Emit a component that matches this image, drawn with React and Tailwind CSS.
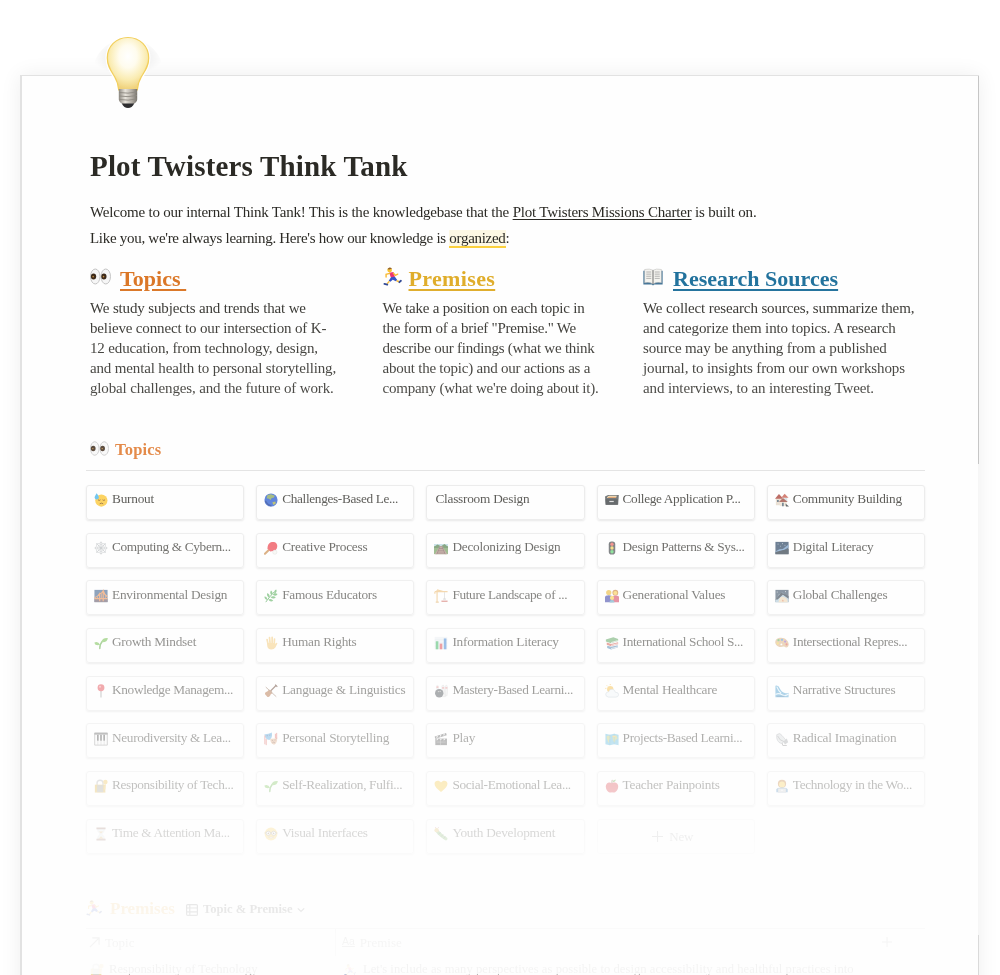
import React from "react";

const shapes = {
  eyes: (
    <>
      <ellipse cx="4" cy="8" rx="3.6" ry="5.7" fill="#f6f6f6" stroke="#bdbdbd" strokeWidth=".7" />
      <ellipse cx="12" cy="8" rx="3.6" ry="5.7" fill="#f6f6f6" stroke="#bdbdbd" strokeWidth=".7" />
      <ellipse cx="2.700" cy="8" rx="2" ry="2.300" fill="#33200f" />
      <ellipse cx="10.600" cy="8" rx="2" ry="2.300" fill="#33200f" />
      <circle cx="2.400" cy="8.100" r=".6" fill="#c58a3a" />
      <circle cx="10.300" cy="8.100" r=".6" fill="#c58a3a" />
    </>
  ),
  runner: (
    <>
      <circle cx="5.600" cy="2.600" r="2" fill="#f7c12c" />
      <path d="M3.800 1.800Q5.200-.6 7.600 1.200L5.400 2.100Z" fill="#8a5a2a" />
      <path d="M5.200 4.800 8.800 4.200 10 8.400 6.800 9.200Z" fill="#ea2a6a" />
      <path d="M5.600 5.400 2.600 6.200 2.600 8.400M8.800 5.200l1.600 1.800 2-1" fill="none" stroke="#f7b72c" strokeWidth="1.200" strokeLinecap="round" />
      <path d="M6.800 8.600 10 8.200 12 11 10.900 12 8.200 10.800 6.200 12.400 4.800 11.600Z" fill="#2a4cc4" />
      <path d="m5.400 12-2 2.200M11.400 11.600l2.400.8" stroke="#f7b72c" strokeWidth="1.200" />
      <path d="m1.200 14.200 2.400.7M13.800 12.800l1.300-1.200" stroke="#27408f" strokeWidth="1.500" strokeLinecap="round" />
    </>
  ),
  book: (
    <>
      <path d="M.3 3h15.400v11H9l-1 .8-1-.8H.3Z" fill="#3d6f92" />
      <path d="M1.300 2Q5.500 1 8 2.600 10.500 1 14.700 2v10.500Q10.500 11.700 8 13.500 5.500 11.700 1.300 12.500Z" fill="#f4f3ee" stroke="#b5b5b5" strokeWidth=".4" />
      <path d="M8 2.600v10.900" stroke="#666" strokeWidth=".8" />
      <path d="M2.600 4h4M2.600 5.700h4M2.600 7.400h4M2.600 9.100h4M9.400 4h4M9.400 5.700h4M9.400 7.400h4M9.400 9.100h4" stroke="#999" strokeWidth=".6" />
    </>
  ),
  sweat: (
    <>
      <circle cx="8.400" cy="8.600" r="7" fill="#fbc531" />
      <path d="M4.600 7.800q1.400 1.400 2.800 0M9.800 7.800q1.400 1.400 2.800 0M6.500 12.400q2-1.600 4 0" fill="none" stroke="#7a4a12" strokeWidth="1" />
      <path d="M3 .4C5 3.200 5.600 4.200 5.600 5.400A2.500 2.500 0 0 1 .7 5.400C.7 4.200 1.500 3 3 .4Z" fill="#45b4ec" />
    </>
  ),
  globe: (
    <>
      <circle cx="8" cy="8" r="7.500" fill="#2f5fd0" />
      <path d="M4 2.200 8 1.400 12.500 3 11 5.500 8.800 5.600 7.500 8 5.600 6.500 3 6Z" fill="#8aa860" />
      <path d="M9.500 10.500 13 9.800 13.400 12 10.800 13.600Z" fill="#a9b04a" />
      <path d="M1.500 9q2.500 5 7 5.500" fill="none" stroke="#1c3f9c" strokeWidth="1.600" />
    </>
  ),
  cardbox: (
    <>
      <path d="M0 4 3.500 2.300h12.300L15 13.500H.8Z" fill="#4b4f52" />
      <path d="M2.500 4.500 4.500 3h9l-1 2.600H2.500Z" fill="#eadfb6" />
      <path d="M2.500 5.600h10l.4-1.200H4.500Z" fill="#d98b4a" />
      <path d="M.5 7h14v6.500H.8Z" fill="#363b3e" />
      <path d="M5 9h5v1.400H5Z" fill="#d8d8d8" />
    </>
  ),
  houses: (
    <>
      <path d="M1 6h8v8H1Z" fill="#e3d6c6" />
      <path d="M0 6.500 4.500 1 9.600 6.500Z" fill="#a94136" />
      <path d="M8 5h6v5H8Z" fill="#cfdbe0" />
      <path d="M7.200 5.500 11 .8l4.500 4.700Z" fill="#c75b4c" />
      <path d="M5.500 9.500h8V15h-8Z" fill="#ece0d0" />
      <path d="M4.500 10.300 9 5.800l5.600 4.500Z" fill="#9b4a3e" />
      <path d="M8 11h2v4H8ZM2.300 8h2v2.200h-2Z" fill="#4e6474" />
      <path d="m12 12 4 3.500h-3.500Z" fill="#30383b" />
    </>
  ),
  web: (
    <g fill="none" stroke="#a5aaae" strokeWidth=".6">
      <path d="M8 .5v15M.5 8h15M2.600 2.600l10.800 10.800M13.400 2.600 2.600 13.400" />
      <path d="m8 1.600 2.200 1.500 2.600.2.300 2.600L14.500 8l-1.400 2.200-.3 2.600-2.600.3L8 14.500l-2.200-1.400-2.600-.3-.3-2.600L1.500 8l1.400-2.200.3-2.600 2.600-.2ZM8 4l2.800 1.200L12 8l-1.200 2.800L8 12l-2.800-1.200L4 8l1.200-2.800ZM8 6.200 9.800 8 8 9.800 6.200 8Z" />
    </g>
  ),
  pingpong: (
    <>
      <path d="m6.300 9.500-5.200 5" stroke="#c98a48" strokeWidth="2.400" strokeLinecap="round" />
      <path d="M4 8.200C4 2.500 8 .6 11.500 1.200 15.600 2 16.500 7.200 13 10.500L10.500 11.500 7 12Z" fill="#ec3b45" />
      <circle cx="12.400" cy="12.800" r="2.400" fill="#f5f5f0" stroke="#ccc" strokeWidth=".5" />
    </>
  ),
  railway: (
    <>
      <path d="M0 3.500h16V15H0Z" fill="#6f9b5a" />
      <path d="M0 3.500h16V6H0Z" fill="#b7d9e6" />
      <path d="M0 6.500 4 4l4 2 4-2.500 4 3V8H0Z" fill="#4f7d48" />
      <path d="M6.400 6h3.200L15 15H1Z" fill="#b08a80" />
      <path d="M7 6 3.200 15M9 6l3.800 9M5.500 8.600h5M4.500 11.200h7M3.400 13.800h9.200" stroke="#6f5650" strokeWidth=".8" />
    </>
  ),
  traffic: (
    <>
      <rect x="4.300" y=".5" width="7.400" height="15" rx="3.200" fill="#43484b" />
      <circle cx="8" cy="3.700" r="1.900" fill="#f0625a" />
      <circle cx="8" cy="8" r="1.900" fill="#f3cf52" />
      <circle cx="8" cy="12.300" r="1.900" fill="#57d56a" />
    </>
  ),
  night: (
    <>
      <path d="M.5 1h15v14H.5Z" fill="#27415f" />
      <path d="M.5 12 5 9.500 9 9l6.500-5V7L11 10l-4 1.500L.5 14Z" fill="#6d97c4" />
      <path d="M.5 12.500 6 11l9.500-2v6H.5Z" fill="#263441" />
      <path d="M3 3.500h1M8 3h1M11 5h.8M6 6h.7" stroke="#dbe8f5" strokeWidth=".8" />
    </>
  ),
  bridge: (
    <>
      <path d="M.5 1h15v14H.5Z" fill="#3c5f8a" />
      <path d="M.5 11.500h15V15H.5Z" fill="#5f5060" />
      <path d="M.5 11h15M6.500 5V14M10.500 2V14M.5 10Q5 8.500 6.500 5q2 1 4-3Q12 7 15.500 8.800" fill="none" stroke="#e88a4b" strokeWidth="1.400" />
      <path d="M8.500 5v6M4 8.500v2.500M13 7.500v3.500" stroke="#e88a4b" strokeWidth=".9" />
    </>
  ),
  herb: (
    <>
      <path d="M2 15Q6 9 12 3" fill="none" stroke="#3f9c46" strokeWidth="1.100" />
      <path d="M12 5Q11 1.500 14 .5 15.500 3.500 12 5ZM8.500 7Q6 4.500 8 1.800 11 4 8.500 7ZM10 6.600q2-2.600 5.500-1Q14 9 10 6.600ZM6 10Q2.500 8 3.800 4.600 7.500 6.500 6 10ZM7.500 9.300Q10.500 7 13.500 9.400 11 12.500 7.500 9.300ZM3.800 12.600Q.4 12 .5 8.700q3.500.4 3.300 3.900ZM5 12q3.500-1.500 5.600 1.500Q7 15.600 5 12Z" fill="#55ad58" />
    </>
  ),
  crane: (
    <>
      <path d="M1 3h14.500M3.500 1v14M3.500 1l7 2M1 3v2.500" stroke="#ecbc74" strokeWidth="1.300" fill="none" />
      <path d="M2 15h3.500" stroke="#e2b46e" strokeWidth="1.300" />
      <path d="M12 3.500v8" stroke="#bbb" strokeWidth=".7" />
      <path d="M8.500 14h7" stroke="#cf6a62" strokeWidth="1.500" />
      <path d="M10.500 11.500h3" stroke="#bbb" strokeWidth="1.300" />
    </>
  ),
  family: (
    <>
      <circle cx="4.300" cy="4" r="3" fill="#e9b62f" />
      <circle cx="11.800" cy="4.200" r="3.300" fill="#c87a2b" />
      <circle cx="11.800" cy="4.600" r="2.300" fill="#f8cb45" />
      <path d="M0 15V9.500Q0 7 4.300 7T8 9.500V15Z" fill="#3b40a6" />
      <path d="M8 15V9.500Q8 7.500 12 7.500T16 9.500V15Z" fill="#d5405c" />
      <circle cx="8" cy="10.200" r="2.400" fill="#f8cb45" />
      <path d="M5.200 15.500Q5.200 12.600 8 12.600t2.800 2.900Z" fill="#5ba4bf" />
    </>
  ),
  galaxy: (
    <>
      <path d="M.5 1h15v14H.5Z" fill="#34495f" />
      <path d="M.5 13 5 6 8 4l7.500 6v5H.5Z" fill="#a7c5d4" />
      <path d="m7 4 8.500 4v3L9 6.500 3 12 .5 12Z" fill="#1f2c3b" />
      <path d="M4 15Q5 8.500 9.500 9t5 6Z" fill="#e9d2b0" />
      <path d="m9 12 1 2H8Z" fill="#db6a3d" />
      <path d="M2 3.500h1M11.500 3h1" stroke="#fff" strokeWidth=".8" />
    </>
  ),
  seedling: (
    <>
      <path d="M6.600 15Q6.200 10 9.500 6" fill="none" stroke="#5aa83e" strokeWidth="1.500" />
      <path d="M8.500 7Q9 1.800 15.800 2.200 15.500 7.500 8.500 7ZM7 10Q4.500 5.500.3 7.600 1.500 11.600 7 10Z" fill="#6cbb45" />
    </>
  ),
  hand: (
    <>
      <path d="M4.600 9 3.500 4M6.900 8 6.300 1.800M9.300 8V1.500M11.700 8.500l.3-5" stroke="#f3c978" strokeWidth="1.900" strokeLinecap="round" />
      <path d="M3.600 8h9l.5 1Q14 7.200 15.400 8.200L13 13.200Q11.400 15.500 8.500 15.500 4 15.500 3.600 10.500Z" fill="#f3c978" />
    </>
  ),
  chart: (
    <>
      <path d="M.8 1h14.400v14.200H.8Z" fill="#e9eef2" />
      <path d="M.8 4.500h14.400M.8 8h14.400M.8 11.500h14.400" stroke="#c9d3db" strokeWidth=".5" />
      <path d="M2 6h3v9.200H2Z" fill="#38b35c" />
      <path d="M6.500 8.700h3v6.500h-3Z" fill="#dc4148" />
      <path d="M11.200 2.800h3v12.400h-3Z" fill="#3a7fd0" />
    </>
  ),
  books: (
    <>
      <path d="M1 4 9.500 1.500l5.500 2v2.300L7 8.200 1 6.200Z" fill="#5da35f" />
      <path d="m2 7.500 5 1.600 8-2v2.400l-8 2.200-5-1.700Z" fill="#d35548" />
      <path d="m2.500 11 4.500 1.400 7.500-1.900v2.600L7 15.300l-4.500-1.500Z" fill="#4f84b2" />
      <path d="m7 7.500 7.500-2.200M7 10.800l7.500-2M7 14.400l7-1.800" stroke="#eee" strokeWidth=".9" />
    </>
  ),
  palette: (
    <>
      <path d="M5.500 2C11 1 16 5.500 15.700 9.800c-.2 3.200-3 4-4.700 2.600-1.500-1.100-2.900.2-4.300.3C2.500 12.700 0 9.500.3 6.700.5 3.800 2.800 2.300 5.500 2Z" fill="#d9ae7c" />
      <circle cx="4" cy="4.800" r="1.300" fill="#4caf50" />
      <circle cx="8" cy="4.300" r="1.300" fill="#3d8bd4" />
      <circle cx="11.600" cy="6.400" r="1.300" fill="#8c54bd" />
      <circle cx="13.200" cy="9.600" r="1.200" fill="#e1493e" />
      <circle cx="3.200" cy="8.400" r="1.300" fill="#f2ce3b" />
      <circle cx="7.300" cy="9.600" r="1.100" fill="#fff" />
    </>
  ),
  pin: (
    <>
      <path d="M8 7v8.500" stroke="#9c9c9c" strokeWidth="1.400" />
      <circle cx="8" cy="4.300" r="3.900" fill="#e3424a" />
      <circle cx="6.900" cy="3.200" r="1.200" fill="#f69aa0" />
    </>
  ),
  violin: (
    <>
      <path d="m6.500 9 7.500-7.500" stroke="#5a3524" strokeWidth="1.500" />
      <path d="M1.200 11.800C.4 9.800 2.800 8.700 4.200 8.200 5 6.500 6.500 5.700 8.400 7.600s1 3.500-.7 4.200C7.200 13.200 6 15.600 4 14.800Z" fill="#b0683a" />
      <path d="m2 3.500 12 11" stroke="#8c6a52" strokeWidth="1" />
      <path d="m12.800.8 2.400 2.400" stroke="#5a3524" strokeWidth="1.300" />
    </>
  ),
  piano: (
    <>
      <path d="M.8 1h14.400v14H.8Z" fill="#fafafa" stroke="#777" strokeWidth=".9" />
      <path d="M.5 1h15v2H.5Z" fill="#555" />
      <path d="M4.400 3v7M8 3v7M11.600 3v7" stroke="#333" strokeWidth="1.900" />
      <path d="M4.400 10v5M8 10v5M11.600 10v5" stroke="#999" strokeWidth=".6" />
    </>
  ),
  masks: (
    <>
      <path d="M.5 2.500Q4 3 9 .5q1 7-3 8.500Q1.500 9 .5 2.500Z" fill="#4a9fda" />
      <path d="M7 7.500q4 1 8-1.500.5 7-3.500 8.500Q7.500 14 7 7.500Z" fill="#dba780" />
      <path d="M3 4.300h1.400M6 3.700l1.300-.3" stroke="#173e78" strokeWidth="1" />
      <path d="M1 4v10M2.500 8v7M14.500 1v7M13 2v5" stroke="#d9544e" strokeWidth="1.100" />
      <path d="M9 9.600h1.300M12 9.200l1.200-.2M9.500 12.400q1.500-1.500 3 0" fill="none" stroke="#6b3b2b" strokeWidth=".8" />
    </>
  ),
  bowling: (
    <>
      <path d="M9 2q2-2 2.500.5L12 8l1 6.500H9ZM13 2q2-1.500 2.300.5l.3 5-.6 6h-2Z" fill="#ececec" stroke="#bbb" strokeWidth=".4" />
      <path d="M9.300 4.500h2.300M13 4.500h2.300" stroke="#e04747" strokeWidth="1" />
      <path d="M2.800 1.500Q4 .4 5.100 1.500L6 8H2Z" fill="#e7e7e7" />
      <path d="M2.800 3.500h2.300" stroke="#e04747" />
      <circle cx="6" cy="10.600" r="4.800" fill="#454a50" />
      <circle cx="5" cy="8.700" r=".7" fill="#bbb" />
      <circle cx="7" cy="8.500" r=".7" fill="#bbb" />
    </>
  ),
  cloud: (
    <>
      <circle cx="6" cy="6" r="3.600" fill="#f6bb3e" />
      <path d="M6 0v1.300M.3 5h1.300M2 1.600l1 1" stroke="#f6bb3e" strokeWidth="1" />
      <path d="M4 15Q.6 14.500.8 11.600 1.200 9 4 9 5 5.500 8.500 6q2.800.4 3.300 3.400 3.800-.1 3.800 2.900Q15.300 15 12.300 15Z" fill="#f1f5f8" stroke="#b6c4cc" strokeWidth=".7" />
    </>
  ),
  clapper: (
    <>
      <path d="M1.500 7.500h13.300V15H1.500Z" fill="#4b4b4b" />
      <path d="m.8 5.200 13-4 .7 2.500-13 4Z" fill="#4b4b4b" />
      <path d="m3 6.500 1-2.300M7 5.300 8 3M11 4l1-2.300M3 9.400l1.500-1.700M7 9.400l1.500-1.700M11 9.400l1.500-1.700" stroke="#eee" strokeWidth="1.200" />
      <path d="M2.800 11.500h10.500M7.500 9.800V15" stroke="#aaa" strokeWidth=".6" />
    </>
  ),
  map: (
    <>
      <path d="m.5 2 5 1 5-1 5 1v12l-5-1-5 1-5-1Z" fill="#56b5dc" />
      <path d="M2 4.500 5.500 4 6.500 7 4.500 9.500 5 13 3.500 11 2 7ZM8.500 4.500 13 4l1.500 3-2.500 2-1 3.500L9 9.500Z" fill="#b9c66e" />
      <path d="M5.500 3v12M10.500 2v12" stroke="#3a93bd" strokeWidth=".5" />
      <path d="M8.800 5h3" stroke="#ebbe4a" strokeWidth="1.600" />
    </>
  ),
  wave: (
    <>
      <path d="M.5 2Q4 1 5.500 5T12 10.500q2 .4 3.500-.5v5H.5Z" fill="#4a9ed0" />
      <path d="M2 3q2 5 5 7.500M.5 12q4-2 7.500.3t7.500-.8" fill="none" stroke="#dff2fb" strokeWidth="1.300" />
      <path d="M2 14h9" stroke="#2d6f9f" strokeWidth="1" />
    </>
  ),
  telescope: (
    <>
      <path d="M2 3Q6 .2 8 4l4.500 5.300-5.300 3.900Q1 11 2 3Z" fill="#d7dadc" stroke="#9a9fa3" strokeWidth=".8" />
      <path d="M3 4.500Q5 10 11 11.300" fill="none" stroke="#85898c" />
      <path d="m9.500 11 4-3.500 1.500 4.200-3.600 2.500Z" fill="#9da1a3" />
      <path d="M8 12.500 9 15.500h4.500" fill="none" stroke="#777" />
    </>
  ),
  lockkey: (
    <>
      <path d="M3.500 7V4.600q0-3.200 3.400-3.200t3.400 3.200V7" fill="none" stroke="#aaa" strokeWidth="1.600" />
      <path d="M1 6.500h12v9H1Z" fill="#d9a92f" />
      <path d="M3.500 7h7v8h-7Z" fill="#9b9a8c" />
      <circle cx="13" cy="3.500" r="2.600" fill="#edba3c" />
      <path d="m12.800 6-.6 6" stroke="#edba3c" strokeWidth="1.500" />
    </>
  ),
  heart: <path d="M8 14.800C3.500 11.500.6 8.700.6 5.500.6 1.800 5.500.3 8 4 10.500.3 15.400 1.800 15.400 5.500c0 3.200-2.900 6-7.400 9.300Z" fill="#f5c22f" />,
  apple: (
    <>
      <path d="M8 4.800Q4.500 3 2.200 5C-.6 8 1.500 13.500 4.500 15.200q2 .6 3.500-.2 1.500.8 3.500.2C14.500 13.500 16.600 8 13.800 5 11.500 3 8 4.800 8 4.800Z" fill="#d93840" />
      <path d="M8 5Q7.600 3 8.300 1" fill="none" stroke="#75452b" strokeWidth="1.100" />
      <path d="M8.500 3.500Q9 .8 12.400.5 12.200 3.400 8.500 3.500Z" fill="#5ea73d" />
    </>
  ),
  technologist: (
    <>
      <circle cx="8" cy="5.500" r="4.700" fill="#be762b" />
      <circle cx="8" cy="6.200" r="3.400" fill="#f8cb45" />
      <path d="M1.500 15V12Q2 9.600 8 9.600t6.500 2.400v3Z" fill="#4384bb" />
      <path d="M3.500 10.800h9V15.200h-9Z" fill="#c9cdd0" stroke="#94999c" strokeWidth=".4" />
      <circle cx="8" cy="12.900" r=".8" fill="#fff" />
    </>
  ),
  hourglass: (
    <>
      <path d="M4 2h8q0 4-3.200 6 3.200 2 3.200 6H4q0-4 3.200-6Q4 6 4 2Z" fill="#dfe8ea" stroke="#aaa" strokeWidth=".4" />
      <path d="M5.500 5h5L8 7.500ZM5 13.500 8 10.500l3 3Z" fill="#d9a54e" />
      <path d="M2.800 1.500h10.400M2.800 14.500h10.400" stroke="#87584a" strokeWidth="1.900" />
    </>
  ),
  nerd: (
    <>
      <circle cx="8" cy="8" r="7.300" fill="#f6c232" />
      <path d="M.8 6.800h14.400" stroke="#4b4438" strokeWidth=".7" />
      <circle cx="4.900" cy="7.200" r="2.400" fill="#fff" stroke="#4b4438" strokeWidth=".7" />
      <circle cx="11.100" cy="7.200" r="2.400" fill="#fff" stroke="#4b4438" strokeWidth=".7" />
      <circle cx="5" cy="7.300" r=".9" fill="#5a3b1b" />
      <circle cx="11" cy="7.300" r=".9" fill="#5a3b1b" />
      <path d="M5 11.500h6q-2.800 2.700-6 0Z" fill="#fff" stroke="#8a5b18" strokeWidth=".5" />
    </>
  ),
  caterpillar: (
    <>
      <path d="M3 4 6 7.500 9.500 10.500l4 3" fill="none" stroke="#62a544" strokeWidth="3.600" strokeLinecap="round" />
      <circle cx="3" cy="3.600" r="2.500" fill="#d6a83a" />
      <path d="M5 8.500 7.500 6M8 11l2.500-2.500M11 13.300l2-2.500" stroke="#394f2f" strokeWidth=".9" />
      <path d="M2 1 1.500 0M4.500 1.200 5.400.2" stroke="#a23" strokeWidth=".7" />
    </>
  ),
};

function Emoji({ name, className }) {
  return (
    <svg viewBox="0 0 16 16" className={className} aria-hidden="true">
      {shapes[name]}
    </svg>
  );
}

const bulbOutline =
  "M24 2.500C12 2.500 3.300 11.500 3.300 23c0 8 3.500 12.500 7.200 18.500 3 5 3.800 8 4.200 13.500h18.600c.4-5.500 1.200-8.500 4.200-13.500 3.700-6 7.200-10.500 7.200-18.500C44.700 11.500 36 2.500 24 2.500Z";

function Bulb() {
  return (
    <svg viewBox="0 0 48 76" className="absolute left-[104px] top-[35px] h-[76px] w-12 overflow-visible" aria-hidden="true">
      <defs>
        <radialGradient id="glass" cx=".5" cy=".36" r=".62">
          <stop offset="0" stopColor="#ffffff" />
          <stop offset=".35" stopColor="#fffcee" />
          <stop offset=".72" stopColor="#faecb2" />
          <stop offset="1" stopColor="#f0d27c" />
        </radialGradient>
        <linearGradient id="metal">
          <stop offset="0" stopColor="#8b8780" />
          <stop offset=".35" stopColor="#e8e4dc" />
          <stop offset=".7" stopColor="#b3aea6" />
          <stop offset="1" stopColor="#77736c" />
        </linearGradient>
        <radialGradient id="halo">
          <stop offset=".5" stopColor="#000" stopOpacity=".06" />
          <stop offset="1" stopColor="#000" stopOpacity="0" />
        </radialGradient>
      </defs>
      <path d="M-12 39.500A36 36 0 1 1 60 39.500Z" fill="url(#halo)" />
      <path d={bulbOutline} fill="#fff" stroke="#fff" strokeWidth="3.600" />
      <path d={bulbOutline} fill="url(#glass)" stroke="#f2cf5c" strokeWidth="1.200" />
      <path d="M14.800 54h18.400v10.500q0 2.500-5 5.500h-8.400q-5-3-5-5.500Z" fill="url(#metal)" />
      <path d="M15 57.500q9 1.500 18-.5M15 61q9 1.500 18-.5M15.300 64.500q9 1.500 17.500-.5" fill="none" stroke="#8d8981" strokeWidth=".9" />
      <path d="M17.800 68.500h12.400Q28 73 24 73t-6.200-4.500Z" fill="#2e2e30" />
    </svg>
  );
}

const overview = [
  {
    icon: "eyes",
    iconClass: "mt-[2px] h-[21px] w-[21px]",
    title: "Topics\u00a0",
    section: "w-[292.500px]",
    heading: "gap-[9px]",
    color: "text-[#d9701c] tracking-[0.05px]",
    body: "tracking-[-0.150px]",
    lines: [
      "We study subjects and trends that we",
      "believe connect to our intersection of K-",
      "12 education, from technology, design,",
      "and mental health to personal storytelling,",
      "global challenges, and the future of work.",
    ],
  },
  {
    icon: "runner",
    iconClass: "mt-[3px] h-[19px] w-[19px]",
    title: "Premises",
    section: "w-[260.500px]",
    heading: "gap-[7px]",
    color: "text-[#dea920] tracking-[0.350px]",
    body: "tracking-[-0.230px]",
    lines: [
      "We take a position on each topic in",
      "the form of a brief \"Premise.\" We",
      "describe our findings (what we think",
      "about the topic) and our actions as a",
      "company (what we're doing about it).",
    ],
  },
  {
    icon: "book",
    iconClass: "mt-[3px] h-[20px] w-[20px]",
    title: "Research Sources",
    section: "w-[285px]",
    heading: "gap-[10px]",
    color: "text-[#176b98] tracking-[0.02px]",
    body: "tracking-[-0.120px]",
    lines: [
      "We collect research sources, summarize them,",
      "and categorize them into topics. A research",
      "source may be anything from a published",
      "journal, to insights from our own workshops",
      "and interviews, to an interesting Tweet.",
    ],
  },
];

const topics = [
  ["sweat", "Burnout"],
  ["globe", "Challenges-Based Le..."],
  [null, "Classroom Design"],
  ["cardbox", "College Application P..."],
  ["houses", "Community Building"],
  ["web", "Computing & Cybern..."],
  ["pingpong", "Creative Process"],
  ["railway", "Decolonizing Design"],
  ["traffic", "Design Patterns & Sys..."],
  ["night", "Digital Literacy"],
  ["bridge", "Environmental Design"],
  ["herb", "Famous Educators"],
  ["crane", "Future Landscape of ..."],
  ["family", "Generational Values"],
  ["galaxy", "Global Challenges"],
  ["seedling", "Growth Mindset"],
  ["hand", "Human Rights"],
  ["chart", "Information Literacy"],
  ["books", "International School S..."],
  ["palette", "Intersectional Repres..."],
  ["pin", "Knowledge Managem..."],
  ["violin", "Language & Linguistics"],
  ["bowling", "Mastery-Based Learni..."],
  ["cloud", "Mental Healthcare"],
  ["wave", "Narrative Structures"],
  ["piano", "Neurodiversity & Lea..."],
  ["masks", "Personal Storytelling"],
  ["clapper", "Play"],
  ["map", "Projects-Based Learni..."],
  ["telescope", "Radical Imagination"],
  ["lockkey", "Responsibility of Tech..."],
  ["seedling", "Self-Realization, Fulfi..."],
  ["heart", "Social-Emotional Lea..."],
  ["apple", "Teacher Painpoints"],
  ["technologist", "Technology in the Wo..."],
  ["hourglass", "Time & Attention Ma..."],
  ["nerd", "Visual Interfaces"],
  ["caterpillar", "Youth Development"],
];

function TopicCard({ icon, label }) {
  return (
    <div className="flex h-[35px] items-start gap-1 rounded-[3px] border border-[#e6e6e6] pl-[7px] pt-[3.300px] shadow-[0_1px_2px_rgba(0,0,0,0.12)]">
      {icon && <Emoji name={icon} className="mt-[4px] h-[14px] w-[14px] shrink-0" />}
      <span className={`whitespace-nowrap text-[13.300px] leading-5 ${label.endsWith("...") ? "tracking-[-0.340px]" : "tracking-[-0.240px]"} ${icon ? "" : "ml-[1px]"}`}>
        {label}
      </span>
    </div>
  );
}

export default function App() {
  return (
    <div className="relative h-[975px] w-[1000px] overflow-hidden bg-white font-['Liberation_Serif',serif] text-[#2b2a25]">
      <div className="ml-5 mt-[75px] flex h-[920px] w-[959px] flex-col items-end border-l-2 border-t border-[#e2e2e2] bg-[#fefefe] shadow-[0_0_20px_rgba(0,0,0,0.07)]">
        <div className="h-[391px] w-px bg-[#c6c6c6]" />
        <div className="h-[474px] w-px bg-[#f6f6f6]" />
        <div className="h-[60px] w-px bg-[#dadada]" />
      </div>
      <main className="absolute inset-0 pl-[86px] pt-[148px] [mask-image:linear-gradient(to_bottom,#000_240px,rgba(0,0,0,.88)_340px,rgba(0,0,0,.76)_500px,rgba(0,0,0,.56)_600px,rgba(0,0,0,.43)_700px,rgba(0,0,0,.28)_790px,rgba(0,0,0,.17)_840px,rgba(0,0,0,.1)_910px,rgba(0,0,0,.05)_945px,rgba(0,0,0,.05)_974px,rgba(0,0,0,.35)_974px)]">
        <div className="w-[839px]">
          <div className="pl-1">
            <h1 className="h-[51px] whitespace-nowrap text-[29px] font-bold leading-[36px] tracking-[0.170px]">Plot Twisters Think Tank</h1>
            <p className="h-[26px] whitespace-nowrap text-[15px] leading-[26px] tracking-[-0.200px]">
              Welcome to our internal Think Tank! This is the knowledgebase that the{" "}
              <a className="underline decoration-1 underline-offset-2">Plot Twisters Missions Charter</a> is built on.
            </p>
            <p className="h-[39px] whitespace-nowrap text-[15px] leading-[27px] tracking-[-0.290px]">
              Like you, we're always learning. Here's how our knowledge is{" "}
              <span className="border-b-2 border-[#fbd03b] bg-[#fdf8e4]">organized</span>:
            </p>
            <div className="flex">
              {overview.map((c) => (
                <section key={c.title} className={`shrink-0 ${c.section}`}>
                  <div className={`flex h-[34px] items-start ${c.heading}`}>
                    <Emoji name={c.icon} className={c.iconClass} />
                    <h2 className={`whitespace-nowrap text-[22px] font-bold leading-[30px] underline decoration-2 underline-offset-[3px] ${c.color}`}>{c.title}</h2>
                  </div>
                  {c.lines.map((l) => (
                    <p key={l} className={`whitespace-nowrap text-[15px] leading-5 ${c.body}`}>{l}</p>
                  ))}
                </section>
              ))}
            </div>
          </div>
          <div className="mt-[40px] flex h-[33px] items-start gap-[6px] border-b border-[#dcdcdc] pl-[4px]">
            <Emoji name="eyes" className="mt-[1px] h-[19px] w-[19px]" />
            <h2 className="text-[16.500px] font-bold leading-6 tracking-[0.200px] text-[#dd6d1c]">Topics</h2>
          </div>
          <div className="mt-[14px] grid grid-cols-5 gap-x-3 gap-y-[12.700px]">
            {topics.map(([icon, label]) => (
              <TopicCard key={label} icon={icon} label={label} />
            ))}
            <div className="flex h-[35px] items-center justify-center gap-[6px] rounded-[3px] border border-[#f0f0f0] pr-[6px] text-[13px] tracking-[-0.300px] text-[#aaa]">
              <svg viewBox="0 0 12 12" className="h-[11px] w-[11px]" fill="none" stroke="currentColor" strokeWidth="1.2">
                <path d="M6 0v12M0 6h12" />
              </svg>
              <span>New</span>
            </div>
          </div>
          <div className="mt-[43px] flex h-[32px] items-start border-b border-[#cccccc]">
            <Emoji name="runner" className="mt-[3px] h-4 w-4" />
            <h2 className="ml-[8px] w-[76px] text-[17px] font-bold leading-6 text-[#e9a93a]">Premises</h2>
            <svg viewBox="0 0 12 12" className="mt-[7px] h-3 w-3" fill="none" stroke="#333" strokeWidth="1.2">
              <rect x=".6" y=".6" width="10.800" height="10.800" rx="1" />
              <path d="M.6 4h10.800M.6 7.800h10.800M3.800.6v10.800" />
            </svg>
            <span className="ml-[5px] text-[12.600px] font-bold leading-6">Topic &amp; Premise</span>
            <svg viewBox="0 0 8 8" className="ml-1 mt-[9px] h-2 w-2" fill="none" stroke="#333" strokeWidth="1.2">
              <path d="m.8 2.300 3.200 3.200 3.200-3.200" />
            </svg>
          </div>
          <div className="flex h-[27px] items-center text-[13px] text-[#55544f]">
            <div className="flex h-full w-[250px] items-center gap-[5px] border-r border-[#ccc] pl-[3px]">
              <svg viewBox="0 0 12 12" className="h-[11px] w-[11px]" fill="none" stroke="currentColor" strokeWidth="1.3">
                <path d="M1 11 11 1M3.500 1H11v7.500" />
              </svg>
              <span>Topic</span>
            </div>
            <div className="flex flex-1 items-center gap-[5px] pl-[6px]">
              <span className="font-['Liberation_Sans',sans-serif] text-[10.500px] underline">Aa</span>
              <span>Premise</span>
            </div>
            <svg viewBox="0 0 10 10" className="mr-[33px] h-[10px] w-[10px]" fill="none" stroke="currentColor">
              <path d="M5 0v10M0 5h10" />
            </svg>
          </div>
          <div className="flex h-[28px] items-center whitespace-nowrap text-[12.600px]">
            <div className="flex w-[250px] items-center gap-[5px] pl-[4px]">
              <Emoji name="lockkey" className="h-[14px] w-[14px]" />
              <span>Responsibility of Technology</span>
            </div>
            <div className="flex items-center gap-[7px] pl-2">
              <Emoji name="runner" className="h-3 w-3" />
              <span className="tracking-[0.040px]">Let's include as many perspectives as possible to design accessibility and healthful practices into</span>
            </div>
          </div>
        </div>
      </main>
      <Bulb />
    </div>
  );
}
